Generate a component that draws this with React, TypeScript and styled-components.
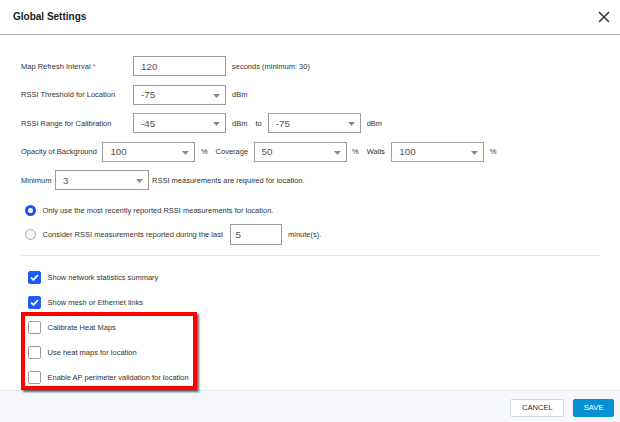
import React from 'react';
import styled, { createGlobalStyle } from 'styled-components';

const GlobalStyle = createGlobalStyle`
  html, body {
    margin: 0;
    padding: 0;
    background: #ffffff;
    font-family: "Liberation Sans", Arial, sans-serif;
  }
  * {
    box-sizing: border-box;
  }
`;

const Dialog = styled.div`
  position: relative;
  width: 620px;
  height: 422px;
  display: flex;
  flex-direction: column;
  background: #ffffff;
  overflow: hidden;
`;

const Header = styled.div`
  height: 35px;
  flex-shrink: 0;
  display: flex;
  align-items: center;
  justify-content: space-between;
  padding: 0 10px 1px 13px;
  border-bottom: 1px solid #a9a9a9;
`;

const Title = styled.h1`
  margin: 0;
  font-size: 10px;
  font-weight: bold;
  color: #222;
`;

const CloseButton = styled.button`
  border: none;
  background: none;
  padding: 0;
  width: 12px;
  height: 12px;
  display: flex;
  cursor: pointer;
`;

const Body = styled.div`
  flex: 1;
  padding: 21px 20px 0 21px;
  display: flex;
  flex-direction: column;
`;

const FieldRows = styled.div`
  display: flex;
  flex-direction: column;
  gap: 8.5px;
`;

const Row = styled.div<{ $gap?: number }>`
  display: flex;
  align-items: center;
  height: 20px;
  gap: ${p => p.$gap ?? 6}px;
  font-size: 7.5px;
  color: #333;
`;

const Label = styled.span<{ $width?: number }>`
  white-space: nowrap;
  ${p => (p.$width ? `width: ${p.$width}px; flex-shrink: 0;` : '')}
`;

const Required = styled.span`
  color: #e53935;
`;

const Unit = styled.span<{ $after?: number }>`
  white-space: nowrap;
  margin-right: ${p => p.$after ?? 0}px;
`;

const Box = styled.div<{ $width?: number }>`
  position: relative;
  width: ${p => p.$width ?? 93}px;
  height: 20px;
  flex-shrink: 0;
  border: 1px solid #9c9c9c;
  background: #fff;
  display: flex;
  align-items: center;
  padding-left: 7px;
  font-size: 9.8px;
  color: #555;
`;

const Caret = styled.svg`
  position: absolute;
  right: 5px;
  top: 8px;
`;

const RadioGroup = styled.div`
  display: flex;
  flex-direction: column;
  gap: 2.5px;
  margin-top: 9px;
  padding-left: 4px;
`;

const RadioRow = styled.label`
  display: flex;
  align-items: center;
  height: 22px;
  gap: 6.5px;
  font-size: 7.5px;
  color: #333;
`;

const RadioDot = styled.span<{ $checked?: boolean }>`
  width: 11px;
  height: 11px;
  border-radius: 50%;
  flex-shrink: 0;
  background: ${p => (p.$checked ? '#fff' : '#f7f7f7')};
  border: ${p => (p.$checked ? '3px solid #1c52f5' : '1px solid #a8a8a8')};
`;

const SmallInput = styled(Box)`
  width: 52px;
  height: 21px;
  padding-left: 5px;
`;

const Divider = styled.hr`
  margin: 9.5px 0 0 0;
  border: none;
  border-top: 1px solid #e6e6e6;
  width: 579px;
`;

const CheckList = styled.div`
  display: flex;
  flex-direction: column;
  margin-top: 9px;
  padding-left: 6.5px;
`;

const CheckRow = styled.label`
  display: flex;
  align-items: center;
  height: 25px;
  gap: 7px;
  font-size: 7.5px;
  color: #333;
`;

const CheckBox = styled.span<{ $checked?: boolean }>`
  width: 13px;
  height: 13px;
  flex-shrink: 0;
  border-radius: 2px;
  display: flex;
  align-items: center;
  justify-content: center;
  background: ${p => (p.$checked ? '#1d5cf6' : '#fff')};
  border: 1px solid ${p => (p.$checked ? '#1d5cf6' : '#9a9a9a')};
`;

const Highlight = styled.div`
  position: absolute;
  left: 21px;
  top: 312px;
  width: 176px;
  height: 78px;
  border: 4px solid #ff0000;
  box-shadow: 2px 2px 2px rgba(0, 0, 0, 0.6);
  pointer-events: none;
`;

const Footer = styled.div`
  height: 35px;
  flex-shrink: 0;
  background: #f5f7fa;
  border-top: 1px solid #e7eaee;
  display: flex;
  align-items: center;
  justify-content: flex-end;
  gap: 9px;
  padding: 0 6px 1px 0;
`;

const Button = styled.button<{ $primary?: boolean }>`
  height: 18px;
  padding: 0 ${p => (p.$primary ? 9.5 : 10.5)}px;
  border-radius: 2px;
  font-family: inherit;
  font-size: 7.6px;
  cursor: pointer;
  background: ${p => (p.$primary ? '#0791d5' : '#fff')};
  color: ${p => (p.$primary ? '#fff' : '#2b3340')};
  border: 1px solid ${p => (p.$primary ? '#0791d5' : '#d3d8de')};
`;

const Select = ({ value, width }: { value: string; width?: number }) => (
  <Box $width={width}>
    {value}
    <Caret width="7" height="4" viewBox="0 0 7 4">
      <polygon points="0,0 7,0 3.5,4" fill="#8a8a8a" />
    </Caret>
  </Box>
);

const Check = ({ checked }: { checked?: boolean }) => (
  <CheckBox $checked={checked}>
    {checked && (
      <svg width="9" height="7" viewBox="0 0 9 7">
        <path d="M1 3.6 L3.4 5.8 L8 1.2" stroke="#fff" strokeWidth="1.8" fill="none" />
      </svg>
    )}
  </CheckBox>
);

const checks = [
  { label: 'Show network statistics summary', checked: true },
  { label: 'Show mesh or Ethernet links', checked: true },
  { label: 'Calibrate Heat Maps', checked: false },
  { label: 'Use heat maps for location', checked: false },
  { label: 'Enable AP perimeter validation for location', checked: false },
];

export default function App() {
  return (
    <>
      <GlobalStyle />
      <Dialog>
        <Header>
          <Title>Global Settings</Title>
          <CloseButton aria-label="Close">
            <svg width="12" height="12" viewBox="0 0 12 12">
              <path d="M1 1 L11 11 M11 1 L1 11" stroke="#333" strokeWidth="1.5" />
            </svg>
          </CloseButton>
        </Header>
        <Body>
          <FieldRows>
            <Row>
              <Label $width={106}>
                Map Refresh Interval <Required>*</Required>
              </Label>
              <Box>120</Box>
              <Unit>seconds (minimum: 30)</Unit>
            </Row>
            <Row>
              <Label $width={106}>RSSI Threshold for Location</Label>
              <Select value="-75" />
              <Unit>dBm</Unit>
            </Row>
            <Row>
              <Label $width={106}>RSSI Range for Calibration</Label>
              <Select value="-45" />
              <Unit $after={2}>dBm</Unit>
              <Unit>to</Unit>
              <Select value="-75" />
              <Unit>dBm</Unit>
            </Row>
            <Row $gap={5.5}>
              <Label>Opacity of Background</Label>
              <Select value="100" />
              <Unit $after={2.5}>%</Unit>
              <Label>Coverage</Label>
              <Select value="50" />
              <Unit $after={2.5}>%</Unit>
              <Label $width={19}>Walls</Label>
              <Select value="100" />
              <Unit>%</Unit>
            </Row>
            <Row $gap={3}>
              <Label $width={31}>Minimum</Label>
              <Select value="3" width={94} />
              <Unit>RSSI measurements are required for location.</Unit>
            </Row>
          </FieldRows>

          <RadioGroup>
            <RadioRow>
              <RadioDot $checked />
              Only use the most recently reported RSSI measurements for location.
            </RadioRow>
            <RadioRow>
              <RadioDot />
              <span>
                Consider RSSI measurements reported during the last
              </span>
              <SmallInput>5</SmallInput>
              minute(s).
            </RadioRow>
          </RadioGroup>

          <Divider />

          <CheckList>
            {checks.map(c => (
              <CheckRow key={c.label}>
                <Check checked={c.checked} />
                {c.label}
              </CheckRow>
            ))}
          </CheckList>
        </Body>
        <Footer>
          <Button>CANCEL</Button>
          <Button $primary>SAVE</Button>
        </Footer>
        <Highlight />
      </Dialog>
    </>
  );
}
